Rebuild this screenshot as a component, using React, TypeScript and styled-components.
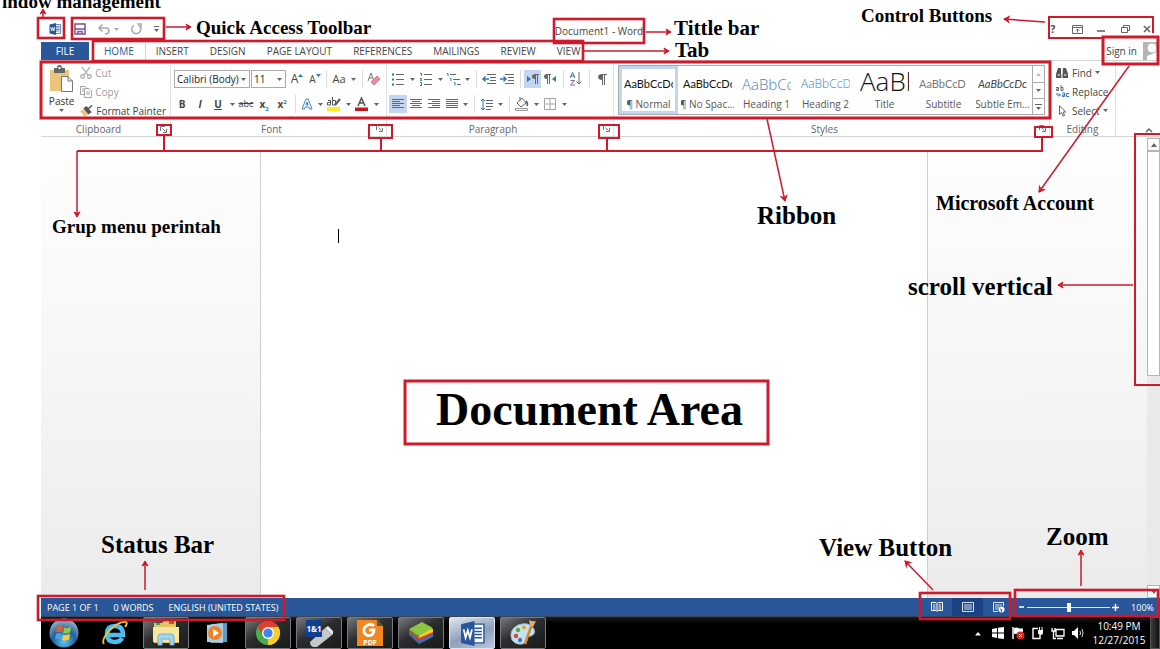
import React from "react";
import styled, { createGlobalStyle, css } from "styled-components";

const RED = "#cf1a2c";
const BLUE = "#2a579a";
const UI = '"Open Sans", "Noto Sans", sans-serif';

const Global = createGlobalStyle`
  *, *::before, *::after { box-sizing: border-box; }
  body { margin: 0; background: #fff; font-family: ${UI}; font-size: 10px; color: #444; }
  button, select, input { font: inherit; color: inherit; }
  button { border: 0; padding: 0; background: none; white-space: nowrap; }
  svg { display: block; flex: none; }
`;

/* ---------- page frame ---------- */

const Screen = styled.div`
  position: relative;
  min-height: 100vh;
  display: flex;
  flex-direction: column;
  padding-left: 41px;
  overflow: hidden;
`;

const TitleBar = styled.header`
  display: flex;
  align-items: center;
  height: 42px;
  padding: 16px 7px 0 6px;
`;

const QuickTools = styled.div`
  display: flex;
  align-items: center;
  width: 124px;
`;

const WindowTitle = styled.h1`
  flex: 1;
  margin: 0;
  padding-top: 3px;
  text-align: center;
  font-size: 10px;
  font-weight: 400;
`;

const WindowTools = styled.div`
  display: flex;
  align-items: center;
  justify-content: flex-end;
  width: 126px;
`;

const Tool = styled.button<{ w?: number; on?: boolean }>`
  display: inline-flex;
  align-items: center;
  justify-content: center;
  width: ${(p) => p.w ?? 18}px;
  height: 18px;
  line-height: 18px;
  flex: none;
  background: ${(p) => (p.on ? "#c3d5f0" : "transparent")};
`;

const TabBar = styled.nav`
  display: flex;
  height: 18px;
  line-height: 16px;
`;

const FileTab = styled.button`
  width: 48px;
  margin-right: 5px;
  background: ${BLUE};
  color: #fff;
`;

const Tab = styled.button<{ on?: boolean }>`
  padding: 0 11px 0 10px;
  color: ${(p) => (p.on ? BLUE : "#444")};
  ${(p) => p.on && css`border-right: 1px solid #d5d5d5;`}
`;

const SignIn = styled.button`
  display: flex;
  align-items: center;
  gap: 5px;
  margin-left: auto;
  padding-right: 2px;
`;

/* ---------- ribbon ---------- */

const Ribbon = styled.section`
  display: flex;
  height: 77px;
  border-top: 1px solid #d5d5d5;
  border-bottom: 1px solid #d5d5d5;
`;

const Group = styled.div<{ w?: number }>`
  display: flex;
  flex-direction: column;
  ${(p) => (p.w ? css`width: ${p.w}px; flex: none;` : css`flex: 1; min-width: 0;`)}
  border-right: 1px solid #e1e1e1;
`;

const GroupBody = styled.div<{ row?: boolean }>`
  display: flex;
  flex-direction: ${(p) => (p.row ? "row" : "column")};
  height: 59px;
  padding: ${(p) => (p.row ? "4px 4px" : "9px 2px 0")};
  gap: ${(p) => (p.row ? 0 : 7)}px;
`;

const GroupFoot = styled.div<{ launch?: boolean }>`
  display: grid;
  grid-template-columns: ${(p) => (p.launch ? "1fr 14px" : "1fr")};
  align-items: center;
  height: 17px;
  padding-top: 2px;
  color: #666;
  text-align: center;
  button { display: grid; place-items: center; }
`;

const Row = styled.div`
  display: flex;
  align-items: center;
  height: 18px;
`;

const Rule = styled.span`
  width: 8px;
  height: 18px;
  flex: none;
  background: linear-gradient(#dcdcdc, #dcdcdc) center / 1px 100% no-repeat;
`;

const Pick = styled.label<{ w: number }>`
  display: grid;
  grid-template-columns: 1fr 12px;
  align-items: center;
  width: ${(p) => p.w}px;
  height: 18px;
  margin: 0 0 0 1px;
  border: 1px solid #ababab;
  color: #222;
  select {
    grid-area: 1 / 1 / 2 / 3;
    appearance: none;
    width: 100%;
    height: 16px;
    border: 0;
    padding: 0 2px;
    background: transparent;
  }
  svg { grid-area: 1 / 2; justify-self: center; }
`;

const PasteButton = styled.button`
  display: flex;
  flex-direction: column;
  align-items: center;
  width: 35px;
  gap: 1px;
  line-height: 14px;
  color: #333;
`;

const Stack = styled.div`
  display: flex;
  flex-direction: column;
  align-self: center;
  padding-top: 2px;
`;

const LabelTool = styled.button<{ dim?: boolean }>`
  display: flex;
  align-items: center;
  gap: 3px;
  height: 19px;
  flex: none;
  color: ${(p) => (p.dim ? "#a0a0a0" : "#444")};
  padding-left: 2px;
`;

const Gallery = styled.div`
  display: flex;
  flex: 1;
  height: 50px;
  border: 1px solid #ababab;
  min-width: 0;
`;

const StyleCard = styled.button<{ on?: boolean }>`
  flex: 1 1 0;
  min-width: 0;
  display: flex;
  flex-direction: column;
  align-items: center;
  padding: 0 2px;
  overflow: hidden;
  border: 3px solid ${(p) => (p.on ? "#c3d5f0" : "transparent")};
`;

const Sample = styled.span<{ size: number; tone: string; light?: boolean; slant?: boolean }>`
  width: 100%;
  height: 28px;
  line-height: ${(p) => (p.size > 20 ? 24 : 30)}px;
  overflow: hidden;
  text-align: left;
  font-family: ${(p) => (p.light ? '"Open Sans"' : "Lato")}, sans-serif;
  font-weight: ${(p) => (p.light ? 300 : 400)};
  font-size: ${(p) => p.size}px;
  font-style: ${(p) => (p.slant ? "italic" : "normal")};
  color: ${(p) => p.tone};
`;

const SampleName = styled.span`
  line-height: 14px;
  color: #555;
`;

const GalleryScroll = styled.div`
  display: grid;
  grid-template-rows: 1fr 1fr 1fr;
  width: 12px;
  border-left: 1px solid #ababab;
  button { display: grid; place-items: center; }
  button + button { border-top: 1px solid #ababab; }
`;

const Collapse = styled.button`
  width: 44px;
  display: flex;
  align-items: flex-end;
  justify-content: flex-end;
  padding: 0 7px 3px 0;
`;

/* ---------- document ---------- */

const Workspace = styled.main`
  flex: 1;
  display: flex;
  background: linear-gradient(#fefefe, #f6f6f6 50%, #ebebeb);
`;

const PageArea = styled.div`
  flex: 1;
  display: flex;
  justify-content: center;
  padding: 14px 0 0;
`;

const Sheet = styled.article`
  width: 60.4%;
  padding: 78px 77px;
  background: #fff;
  border: 1px solid #cfcfcf;
  border-width: 0 1px;
`;

const TextCursor = styled.div`
  width: 1px;
  height: 14px;
  background: #000;
`;

const ScrollBar = styled.div`
  display: flex;
  flex-direction: column;
  width: 13px;
  padding-top: 1px;
  background: #e9e9e9;
  button {
    display: grid;
    place-items: center;
    height: 13px;
    border: 1px solid #b5b5b5;
    background: #fff;
  }
`;

const Thumb = styled.div`
  flex: 0 0 49%;
  margin-bottom: auto;
  border: 1px solid #b5b5b5;
  background: #fff;
`;

/* ---------- status bar ---------- */

const StatusBar = styled.footer`
  display: flex;
  align-items: center;
  height: 18px;
  padding: 0 6px;
  color: #fff;
  background: ${BLUE};
  font-size: 9px;
`;

const StatusItem = styled.span`
  margin-right: 15px;
`;

const Views = styled.div`
  display: flex;
  margin-left: auto;
`;

const ViewButton = styled.button<{ on?: boolean }>`
  display: grid;
  place-items: center;
  width: 31px;
  height: 18px;
  background: ${(p) => (p.on ? "#1b4383" : "transparent")};
`;

const ZoomControl = styled.div`
  display: flex;
  align-items: center;
  gap: 2px;
  margin-left: 5px;
  input {
    appearance: none;
    width: 83px;
    height: 10px;
    margin: 0;
    background: linear-gradient(#dfe6f2, #dfe6f2) center / 100% 1px no-repeat;
  }
  input::-webkit-slider-thumb {
    appearance: none;
    width: 4px;
    height: 9px;
    background: #fff;
  }
`;

const ZoomValue = styled.span`
  margin-left: 10px;
`;

/* ---------- task bar ---------- */

const TaskBar = styled.footer`
  display: flex;
  align-items: stretch;
  gap: 5px;
  height: 33px;
  background: linear-gradient(#1c1c1c, #000 20%);
  border-top: 1px solid #3b4658;
`;

const Task = styled.button<{ look?: "open" | "active" }>`
  display: grid;
  place-items: center;
  width: 46px;
  height: 32px;
  border: 1px solid transparent;
  border-radius: 2px;
  ${(p) => p.look === "open" && css`
    border-color: #77797c;
    background: linear-gradient(150deg, #75777a, #2b2c2e 45%, #1a1a1b);
  `}
  ${(p) => p.look === "active" && css`
    border-color: #dfe5ef;
    background: linear-gradient(160deg, #dfe6f0, #8f9fbb 55%, #b9c6dc);
  `}
`;

const Tray = styled.div`
  display: flex;
  align-items: center;
  margin-left: auto;
`;

const TrayIcons = styled.div`
  display: flex;
  align-items: center;
  gap: 6px;
  margin-right: 3px;
`;

const Clock = styled.time`
  width: 62px;
  text-align: center;
  line-height: 14px;
  color: #fff;
`;

const ShowDesktop = styled.button`
  align-self: stretch;
  width: 10px;
  border: 1px solid #555;
  background: linear-gradient(90deg, #3a3a3a, #111);
`;

/* ---------- callouts drawn over the window ---------- */

const Layer = styled.div<{ h: "left" | "right"; v: "top" | "bottom" }>`
  position: absolute;
  ${(p) => p.h}: 0;
  ${(p) => p.v}: 0;
  width: 1160px;
  height: 649px;
  pointer-events: none;
  svg { position: absolute; inset: 0; overflow: visible; }
`;

const Note = styled.span<{ x: number; y: number; size: number }>`
  position: absolute;
  left: ${(p) => p.x}px;
  top: ${(p) => p.y}px;
  font: 700 ${(p) => p.size}px / 1 "Liberation Serif", serif;
  color: #000;
  white-space: nowrap;
`;

type BoxT = [number, number, number, number, number?];
type LineT = [number, number, number, number];
type NoteT = [string, number, number, number];

function Arrow({ at }: { at: LineT }) {
  const [x1, y1, x2, y2] = at;
  const a = (Math.atan2(y2 - y1, x2 - x1) * 180) / Math.PI;
  return (
    <g>
      <path d={`M${x1} ${y1}L${x2} ${y2}`} strokeWidth="1.5" />
      <path d="M-5 -3L0 0L-5 3L-3.5 0Z" fill={RED} strokeWidth="1" transform={`translate(${x2} ${y2}) rotate(${a})`} />
    </g>
  );
}

function Callouts(p: { h: "left" | "right"; v: "top" | "bottom"; boxes?: BoxT[]; arrows?: LineT[]; paths?: string[]; notes?: NoteT[] }) {
  return (
    <Layer h={p.h} v={p.v}>
      <svg width="1160" height="649" fill="none" stroke={RED} aria-hidden="true">
        {p.boxes?.map(([x, y, x2, y2, s], i) => (
          <rect key={i} x={x} y={y} width={x2 - x} height={y2 - y} strokeWidth={s ?? 2.6} />
        ))}
        {p.paths?.map((d) => <path key={d} d={d} strokeWidth="2" />)}
        {p.arrows?.map((at, i) => <Arrow key={i} at={at} />)}
      </svg>
      {p.notes?.map(([t, x, y, size]) => <Note key={t} x={x} y={y} size={size}>{t}</Note>)}
    </Layer>
  );
}

/* ---------- icons ---------- */

const Caret = ({ c = "#666" }: { c?: string }) => (
  <svg width="5" height="3" viewBox="0 0 5 3"><path d="M0 0H5L2.5 3Z" fill={c} /></svg>
);
const CaretTool = ({ w = 10, label }: { w?: number; label: string }) => (
  <Tool w={w} aria-label={label}><Caret /></Tool>
);

const I = ({ s = 16, w, h, children }: { s?: number; w?: number; h?: number; children: React.ReactNode }) => (
  <svg width={w ?? s} height={h ?? s} viewBox={`0 0 ${w ?? s} ${h ?? s}`} fill="none" stroke="#666" aria-hidden="true">{children}</svg>
);

const WordMark = ({ size }: { size: number }) => (
  <svg width={size} height={size} viewBox="0 0 24 24" aria-hidden="true">
    <path d="M12 3H23V21H12Z" fill="#fff" stroke={BLUE} strokeWidth="1.4" />
    <path d="M14 7H21M14 10H21M14 13H21M14 16H21" stroke={BLUE} strokeWidth="1.5" />
    <path d="M1 3L14 0V24L1 21Z" fill={BLUE} />
    <path d="M3.5 8L5.4 16L7.5 9L9.6 16L11.5 8" fill="none" stroke="#fff" strokeWidth="1.7" />
  </svg>
);

const Lines = ({ rows }: { rows: [number, number][] }) => (
  <I w={12} h={12}>{rows.map(([a, b], i) => <path key={i} d={`M${a} ${1.5 + i * 2}H${b}`} />)}</I>
);

const Launcher = () => (
  <I w={7} h={7}><path d="M.5 5V.5H5M2.5 2.5L5.5 5.5M6.5 3V6.5H3" stroke="#777" /></I>
);

const Foot = ({ name, launch }: { name: string; launch?: boolean }) => (
  <GroupFoot launch={launch}>
    <span>{name}</span>
    {launch && <button aria-label={`${name} settings`}><Launcher /></button>}
  </GroupFoot>
);

const Indent = ({ flip }: { flip?: boolean }) => (
  <I w={14} h={12}>
    <path d="M5 1.5H14M8 4.5H14M8 7.5H14M5 10.5H14" />
    <path d={flip ? "M0 6H6M3.5 3.5L6 6L3.5 8.5" : "M7 6H1M3.5 3.5L1 6L3.5 8.5"} stroke="#2f74b5" strokeWidth="1.4" />
  </I>
);

const Letter = styled.span<{ size?: number; bold?: boolean; italic?: boolean; line?: string; tone?: string }>`
  font-size: ${(p) => p.size ?? 10}px;
  font-weight: ${(p) => (p.bold ? 700 : 400)};
  font-style: ${(p) => (p.italic ? "italic" : "normal")};
  text-decoration: ${(p) => p.line ?? "none"};
  color: ${(p) => p.tone ?? "#444"};
  sub, sup { font-size: 6px; line-height: 0; color: #2f74b5; }
`;

/* ---------- sections ---------- */

function Clipboard() {
  return (
    <Group w={130}>
      <GroupBody row>
        <PasteButton>
          <svg width="25" height="28" viewBox="0 0 25 28" aria-hidden="true">
            <path d="M1 5H20V26H1Z" fill="#ecc57c" />
            <path d="M5 3H8Q8 0 10.500 0T13 3H16V8H5Z" fill="#666" />
            <path d="M9.500 2H11.500V4H9.500Z" fill="#fff" />
            <path d="M12.500 11.500H19L23.500 16V26.500H12.500Z" fill="#fff" stroke="#777" />
            <path d="M19 11.500V16H23.500" fill="none" stroke="#777" />
          </svg>
          Paste
          <Caret />
        </PasteButton>
        <Stack>
          <LabelTool dim>
            <I w={12} h={12}><g stroke="#a5a5a5" strokeWidth="1.200"><path d="M2 0L8 8M10 0L4 8" /><circle cx="2.600" cy="9.500" r="1.800" /><circle cx="9.400" cy="9.500" r="1.800" /></g></I>
            Cut
          </LabelTool>
          <LabelTool dim>
            <I w={12} h={12}><g stroke="#a5a5a5"><path d="M4.500 8.500H.5V.5H5L6.500 2M2 3H4M2 5H4" /><path d="M4.500 2.500H9L11.500 5V11.500H4.500ZM6 6H10M6 8H10" fill="#fff" /></g></I>
            Copy
          </LabelTool>
          <LabelTool>
            <I w={13} h={12}><path d="M0 6L4 4L8 9L5 12Z" fill="#ecc57c" stroke="none" /><path d="M4.500 3.500L6.500 2L10.500 7L8.500 8.500ZM8 4L12 .5" fill="#555" stroke="#555" strokeWidth="1.600" /></I>
            Format Painter
          </LabelTool>
        </Stack>
      </GroupBody>
      <Foot name="Clipboard" launch />
    </Group>
  );
}

function FontGroup() {
  return (
    <Group w={216}>
      <GroupBody>
        <Row>
          <Pick w={76}><select aria-label="Font"><option>Calibri (Body)</option></select><Caret /></Pick>
          <Pick w={35}><select aria-label="Font size"><option>11</option></select><Caret /></Pick>
          <Tool w={22} aria-label="Grow font"><Letter size={12}>A</Letter><I w={5} h={10}><path d="M0 3L2.500 0L5 3Z" fill="#2f74b5" stroke="none" /></I></Tool>
          <Tool w={14} aria-label="Shrink font"><Letter>A</Letter><I w={5} h={10}><path d="M0 0H5L2.500 3Z" fill="#2f74b5" stroke="none" /></I></Tool>
          <Rule />
          <Tool w={18}><Letter size={11}>Aa</Letter></Tool>
          <CaretTool label="Change case" />
          <Rule />
          <Tool w={16} aria-label="Clear formatting">
            <I w={14} h={14}><path d="M1 9L4 1L7 9M2 6H6" stroke="#777" /><path d="M4 10L10 4L13 7L7 13Z" fill="#e68e99" stroke="#d77b88" /></I>
          </Tool>
        </Row>
        <Row>
          <Tool><Letter bold>B</Letter></Tool>
          <Tool><Letter bold italic>I</Letter></Tool>
          <Tool><Letter bold line="underline">U</Letter></Tool>
          <CaretTool label="Underline styles" />
          <Tool><Letter size={9} line="line-through">abc</Letter></Tool>
          <Tool><Letter bold>x<sub>2</sub></Letter></Tool>
          <Tool><Letter bold>x<sup>2</sup></Letter></Tool>
          <Rule />
          <Tool w={16} aria-label="Text effects">
            <I w={12} h={12}><path d="M1 11L5 1H7L11 11H8.500L7.800 9H4.200L3.500 11ZM5 7H7L6 4Z" stroke="#3f83c4" /></I>
          </Tool>
          <CaretTool label="Text effect styles" />
          <Tool aria-label="Highlight">
            <I w={14} h={14}><path d="M1 3.500H3.500V8H.5V5.500H3.500M5.500 0V8H8.500V3.500H5.500" stroke="#555" /><path d="M8 8L13 2" stroke="#555" strokeWidth="2" /><path d="M0 10H13V14H0Z" fill="#ffee1c" stroke="none" /></I>
          </Tool>
          <CaretTool label="Highlight colours" />
          <Tool aria-label="Font colour">
            <I w={14} h={14}><path d="M3 9L6.500 1L10 9M4.500 6H8.500" stroke="#555" strokeWidth="1.500" /><path d="M0 10.500H13V14H0Z" fill="#c8141e" stroke="none" /></I>
          </Tool>
          <CaretTool label="Font colours" />
        </Row>
      </GroupBody>
      <Foot name="Font" launch />
    </Group>
  );
}

function ParagraphGroup() {
  return (
    <Group w={227}>
      <GroupBody>
        <Row>
          <Tool aria-label="Bullets"><I w={12} h={13}><path d="M4 1.500H12M4 6.500H12M4 11.500H12" /><path d="M0 .5H2V2.500H0ZM0 5.500H2V7.500H0ZM0 10.500H2V12.500H0Z" fill="#2f74b5" stroke="none" /></I></Tool>
          <CaretTool label="Bullet library" />
          <Tool aria-label="Numbering"><I w={12} h={13}><path d="M4 1.500H12M4 6.500H12M4 11.500H12" /><path d="M0 .5H1.500V3M0 5.500H1.500L.5 7.500H2M0 9.500H1.500V12.500H0" stroke="#2f74b5" /></I></Tool>
          <CaretTool label="Numbering library" />
          <Tool aria-label="Multilevel list"><I w={14} h={13}><path d="M3 1.500H9M6 6.500H13M10 11.500H14" /><path d="M0 .5H1V3M3 5.500H4V8M7 9.500H8V12.500" stroke="#2f74b5" /></I></Tool>
          <CaretTool label="List library" w={9} />
          <Rule />
          <Tool aria-label="Decrease indent"><Indent /></Tool>
          <Tool aria-label="Increase indent"><Indent flip /></Tool>
          <Rule />
          <Tool on w={17} aria-label="Left to right"><I w={12} h={10}><path d="M0 2L4 5L0 8Z" fill="#2f74b5" stroke="none" /><path d="M8.500 10V.5M10.500 10V.5M12 .5H8" /><path d="M8 0Q5 0 5 2.500T8 5Z" fill="#666" stroke="none" /></I></Tool>
          <Tool aria-label="Right to left"><I w={12} h={10}><path d="M12 2L8 5L12 8Z" fill="#2f74b5" stroke="none" /><path d="M3.500 10V.5M5.500 10V.5M7 .5H3" /><path d="M3 0Q0 0 0 2.500T3 5Z" fill="#666" stroke="none" /></I></Tool>
          <Rule />
          <Tool aria-label="Sort"><I w={12} h={14}><path d="M0 6L2.500 .5L5 6M1 4H4" stroke="#2f74b5" /><path d="M.5 8.500H4.500L.5 13H5" stroke="#85629e" /><path d="M9 0V12M6.500 9.500L9 12L11.500 9.500" /></I></Tool>
          <Rule />
          <Tool aria-label="Show marks"><I w={9} h={11}><path d="M4.500 11V.5M6.500 11V.5M9 .5H4" /><path d="M4.500 0Q0 0 0 3T4.500 6Z" fill="#666" stroke="none" /></I></Tool>
        </Row>
        <Row>
          <Tool on aria-label="Align left"><Lines rows={[[0, 12], [0, 8], [0, 12], [0, 8], [0, 12]]} /></Tool>
          <Tool aria-label="Centre"><Lines rows={[[0, 12], [2, 10], [0, 12], [2, 10], [0, 12]]} /></Tool>
          <Tool aria-label="Align right"><Lines rows={[[0, 12], [4, 12], [0, 12], [4, 12], [0, 12]]} /></Tool>
          <Tool aria-label="Justify"><Lines rows={[[0, 12], [0, 12], [0, 12], [0, 12], [0, 12]]} /></Tool>
          <CaretTool label="Justify options" w={9} />
          <Rule />
          <Tool aria-label="Line spacing"><I w={12} h={13}><path d="M5 2.500H12M5 5.500H12M5 8.500H12M5 11.500H10" /><path d="M2 1V12M0 3L2 1L4 3M0 10L2 12L4 10" stroke="#2f74b5" /></I></Tool>
          <CaretTool label="Spacing options" w={9} />
          <Rule />
          <Tool aria-label="Shading"><I w={14} h={14}><path d="M2 6L7 1L11 6L6 10ZM5 4V0" /><path d="M11 4Q13 6 12 9" stroke="#2f74b5" strokeWidth="1.800" /><path d="M.5 11.500H12.500V13.500H.5Z" stroke="#999" /></I></Tool>
          <CaretTool label="Shading colours" />
          <Tool aria-label="Borders"><I w={12} h={12}><path d="M.5 .5H11.500V11.500H.5ZM6 0V12M0 6H12" stroke="#a5a5a5" /></I></Tool>
          <CaretTool label="Border options" />
        </Row>
      </GroupBody>
      <Foot name="Paragraph" launch />
    </Group>
  );
}

const samples = [
  { name: "¶ Normal", text: "AaBbCcDc", size: 11, tone: "#111" },
  { name: "¶ No Spac...", text: "AaBbCcDc", size: 11, tone: "#111" },
  { name: "Heading 1", text: "AaBbCc", size: 15, tone: "#4684b8", light: true },
  { name: "Heading 2", text: "AaBbCcD", size: 12, tone: "#4684b8", light: true },
  { name: "Title", text: "AaBb", size: 26, tone: "#111", light: true },
  { name: "Subtitle", text: "AaBbCcD", size: 11, tone: "#777" },
  { name: "Subtle Em...", text: "AaBbCcDc", size: 11, tone: "#444", slant: true },
];

function StylesGroup() {
  return (
    <Group>
      <GroupBody row>
        <Gallery>
          {samples.map((s, i) => (
            <StyleCard key={s.name} on={i === 0}>
              <Sample size={s.size} tone={s.tone} light={s.light} slant={s.slant}>{s.text}</Sample>
              <SampleName>{s.name}</SampleName>
            </StyleCard>
          ))}
          <GalleryScroll>
            <button aria-label="Previous styles"><svg width="5" height="3" viewBox="0 0 5 3"><path d="M0 3H5L2.500 0Z" fill="#bbb" /></svg></button>
            <button aria-label="Next styles"><Caret /></button>
            <button aria-label="All styles"><svg width="7" height="6" viewBox="0 0 7 6"><path d="M0 0H7V1H0ZM1 3H6L3.500 6Z" fill="#666" /></svg></button>
          </GalleryScroll>
        </Gallery>
      </GroupBody>
      <Foot name="Styles" launch />
    </Group>
  );
}

function Editing() {
  return (
    <Group w={66}>
      <GroupBody row>
        <Stack>
          <LabelTool>
            <I w={13} h={11}><path d="M2 1H5V4L5.500 11H0V7ZM7 1H10L12 7V11H6.500V4Z" fill="#555" stroke="none" /><path d="M1.500 8H4M8 8H10.500M6 3V7" stroke="#fff" /></I>
            Find <Caret />
          </LabelTool>
          <LabelTool>
            <I w={13} h={13}><path d="M0 2.500H2.500V5.500H.5V4H2.500M5 0V5.500H7V2.500H5" /><path d="M1 8V10H4M3 8.500L4.500 10L3 11.500" stroke="#2f74b5" /><path d="M6 8H8.500V11.500H6.500V10H8.500M13 8.500H10.500V11.500H13" stroke="#2f74b5" /></I>
            Replace
          </LabelTool>
          <LabelTool>
            <I w={13} h={12}><path d="M3.500 .8V9.500L5.500 7.500L7 11L8.500 10.500L7.200 7H9.800Z" /></I>
            Select <Caret />
          </LabelTool>
        </Stack>
      </GroupBody>
      <Foot name="Editing" />
    </Group>
  );
}

const Tasks = () => (
  <>
    <Task aria-label="Start">
      <svg width="30" height="30" viewBox="0 0 30 30">
        <defs><radialGradient id="orb" cx=".5" cy=".8" r=".8"><stop offset="0" stopColor="#5fc6f0" /><stop offset=".5" stopColor="#1f5f9a" /><stop offset="1" stopColor="#a9c0d4" /></radialGradient></defs>
        <circle cx="15" cy="15" r="14.500" fill="url(#orb)" />
        <path d="M8 9Q11 7 14 9L13 14.500Q10 13 7 14.500Z" fill="#ee5b2a" />
        <path d="M15 9.500Q18 11 22 9L21 14.500Q18 16 14 15Z" fill="#8fc841" />
        <path d="M7 16Q10 14 13 16L12 21.500Q9 20 6 21Z" fill="#45a5e6" />
        <path d="M14 16.500Q17 18 21 16L20 21.500Q17 23 13 22Z" fill="#fccb38" />
      </svg>
    </Task>
    <Task aria-label="Internet Explorer">
      <svg width="28" height="28" viewBox="0 0 28 28" fill="none">
        <path d="M21 19Q19 23 14 23Q6 23 6 15T14 7Q22 7 22 16H8" stroke="#4dbdf1" strokeWidth="4.500" />
        <path d="M3 25Q0 21 8 12Q18 2 25 3Q27 4 24 8" stroke="#f3c431" strokeWidth="1.800" />
      </svg>
    </Task>
    <Task look="open" aria-label="Explorer">
      <svg width="28" height="28" viewBox="0 0 28 28">
        <path d="M2 4H10L12 2H24V8H27V24H2Z" fill="#e3c568" />
        <path d="M4 4H8V6H4Z" fill="#4c9c50" /><path d="M17 2H22V5H17Z" fill="#d24b3c" />
        <path d="M1 8H27V23H1Z" fill="#f8e5a0" />
        <path d="M6 26V18Q6 15 9 15H19Q22 15 22 18V26H18V20H10V26Z" fill="#a2d5ee" stroke="#70afd0" />
      </svg>
    </Task>
    <Task aria-label="Media Player">
      <svg width="24" height="24" viewBox="0 0 24 24">
        <path d="M6 3L22 2V21L6 22Z" fill="#5b9cc6" /><path d="M2 4L18 2V22L2 21Z" fill="#a9cfe5" />
        <circle cx="10" cy="12" r="7" fill="#f0802a" /><path d="M8 8L14 12L8 16Z" fill="#fff" />
      </svg>
    </Task>
    <Task look="open" aria-label="Chrome">
      <svg width="26" height="26" viewBox="0 0 26 26">
        <circle cx="13" cy="13" r="12" fill="#4aae4e" />
        <path d="M13 13L2.600 7A12 12 0 0 1 23.400 7Z" fill="#e2402f" />
        <path d="M13 13L23.400 7A12 12 0 0 1 13 25Z" fill="#fccd2f" />
        <path d="M2.600 7L8 16L13 9Z" fill="#e2402f" /><path d="M23.400 7H13L18 16Z" fill="#fccd2f" />
        <circle cx="13" cy="13" r="6" fill="#fff" /><circle cx="13" cy="13" r="4.600" fill="#4285e8" />
      </svg>
    </Task>
    <Task look="open" aria-label="1&1">
      <svg width="28" height="28" viewBox="0 0 28 28">
        <path d="M5 23L20 9L27 16L12 28Q5 29 5 23Z" fill="#c4c6c9" />
        <path d="M20 9L23 7L29 13L27 16Z" fill="#e8e8ea" />
        <path d="M1 1H17V18H1Z" fill="#103e90" />
        <text x="9" y="13" textAnchor="middle" fontSize="8" fontWeight="700" fill="#fff" fontFamily="Open Sans, sans-serif">1&amp;1</text>
      </svg>
    </Task>
    <Task look="open" aria-label="PDF reader">
      <svg width="28" height="28" viewBox="0 0 28 28">
        <path d="M1 1H21L27 7V27H1Z" fill="#f0871f" /><path d="M21 1L27 7H21Z" fill="#555" />
        <path d="M18 7Q15 4 12 6Q7 8 8 13Q10 18 16 16Q18 14 18 11H13" fill="none" stroke="#fff" strokeWidth="2.800" />
        <text x="14" y="26" textAnchor="middle" fontSize="7" fontWeight="700" fill="#fff" fontFamily="Open Sans, sans-serif">PDF</text>
      </svg>
    </Task>
    <Task look="open" aria-label="BlueStacks">
      <svg width="26" height="24" viewBox="0 0 26 24">
        <path d="M1 14L11 23L25 16V12L1 11Z" fill="#2c76bd" /><path d="M1 11L11 20L25 13V10Z" fill="#e2382d" />
        <path d="M1 9L11 17L25 11V8Z" fill="#f8cc2d" /><path d="M1 8L14 1L25 7L11 15Z" fill="#8cc63e" /><path d="M1 8L11 15V17L1 10Z" fill="#4d952e" />
      </svg>
    </Task>
    <Task look="active" aria-label="Word"><WordMark size={25} /></Task>
    <Task look="open" aria-label="Paint">
      <svg width="28" height="28" viewBox="0 0 28 28">
        <path d="M3 21Q-1 11 9 6Q20 2 25 10Q27 15 22 17Q17 17 18 21Q16 26 9 25Q5 24 3 21Z" fill="#c6e1ee" stroke="#8db4c9" />
        <circle cx="7" cy="17" r="2.300" fill="#d44a3c" /><circle cx="9" cy="11" r="2.200" fill="#5ba546" /><circle cx="15" cy="8.500" r="2" fill="#e9a22f" /><circle cx="11" cy="21" r="2.200" fill="#3c78c8" />
        <path d="M23 5L16 25" stroke="#d68a2c" strokeWidth="2.500" /><path d="M20 1Q24 3 27 2L24 8L21 7Z" fill="#e1ac75" />
      </svg>
    </Task>
  </>
);

export default function App() {
  return (
    <Screen>
      <Global />
      <TitleBar>
        <QuickTools>
          <Tool w={16} aria-label="Window menu"><WordMark size={12} /></Tool>
          <Tool w={34} aria-label="Save"><I w={12} h={12}><path d="M1 1H11V11H1ZM1 6H11M4 11V8.500H8V11" stroke="#80509c" strokeWidth="1.500" /></I></Tool>
          <Tool w={14} aria-label="Undo"><I w={12} h={11}><path d="M1 4H8Q11 4 11 7T7 10M4.500 .5L1 4L4.500 7.500" stroke="#aaa" strokeWidth="1.600" /></I></Tool>
          <Tool w={10} aria-label="Undo history"><Caret c="#aaa" /></Tool>
          <Tool w={30} aria-label="Repeat"><I w={12} h={12}><path d="M8.500 2.300A4.500 4.500 0 1 1 4 2.300M7 1H11V5" stroke="#aaa" strokeWidth="1.500" /></I></Tool>
          <Tool w={10} aria-label="Customize"><svg width="5" height="6" viewBox="0 0 5 6"><path d="M0 0H5V1H0ZM0 3H5L2.500 6Z" fill="#666" /></svg></Tool>
        </QuickTools>
        <WindowTitle>Document1 - Word</WindowTitle>
        <WindowTools>
          <Tool w={16}><Letter bold>?</Letter></Tool>
          <Tool w={32} aria-label="Ribbon options"><I w={11} h={9}><path d="M.5 .5H10.500V8.500H.5ZM.5 2.500H10.500M5.500 7.500V4M4 5.500L5.500 4L7 5.500" /></I></Tool>
          <Tool w={16} aria-label="Minimize"><I w={8} h={6}><path d="M0 5H8" strokeWidth="1.600" /></I></Tool>
          <Tool w={32} aria-label="Restore"><I w={9} h={8}><path d="M2.500 2.500V.5H8.500V5.500H6.500M.5 2.500H6.500V7.500H.5Z" /></I></Tool>
          <Tool w={12} aria-label="Close"><I w={8} h={8}><path d="M1 1L7 7M7 1L1 7" strokeWidth="1.600" /></I></Tool>
        </WindowTools>
      </TitleBar>

      <TabBar>
        <FileTab>FILE</FileTab>
        {["HOME", "INSERT", "DESIGN", "PAGE LAYOUT", "REFERENCES", "MAILINGS", "REVIEW", "VIEW"].map((t, i) => (
          <Tab key={t} on={i === 0}>{t}</Tab>
        ))}
        <SignIn>
          Sign in
          <svg width="16" height="18" viewBox="0 0 16 18"><path d="M1 0H16V2L10 12L5 14V18H1Z" fill="#b5b5b5" /><circle cx="10" cy="6" r="5" fill="#fff" stroke="#b5b5b5" /></svg>
        </SignIn>
      </TabBar>

      <Ribbon>
        <Clipboard />
        <FontGroup />
        <ParagraphGroup />
        <StylesGroup />
        <Editing />
        <Collapse aria-label="Collapse ribbon"><I w={8} h={6}><path d="M1 5L4 2L7 5" strokeWidth="1.500" /></I></Collapse>
      </Ribbon>

      <Workspace>
        <PageArea>
          <Sheet><TextCursor /></Sheet>
        </PageArea>
        <ScrollBar>
          <button aria-label="Scroll up"><svg width="6" height="4" viewBox="0 0 6 4"><path d="M0 4H6L3 0Z" fill="#666" /></svg></button>
          <Thumb />
          <button aria-label="Scroll down"><svg width="6" height="4" viewBox="0 0 6 4"><path d="M0 0H6L3 4Z" fill="#666" /></svg></button>
        </ScrollBar>
      </Workspace>

      <StatusBar>
        <StatusItem>PAGE 1 OF 1</StatusItem>
        <StatusItem>0 WORDS</StatusItem>
        <StatusItem>ENGLISH (UNITED STATES)</StatusItem>
        <Views>
          <ViewButton aria-label="Read mode"><I w={12} h={10}><path d="M6 1.500L5 .5H.5V8.500H5L6 9.500L7 8.500H11.500V.5H7ZM6 1.500V9M2 3H4.500M2 5H4.500M2 7H4.500M7.500 3H10M7.500 5H10M7.500 7H10" stroke="#fff" /></I></ViewButton>
          <ViewButton on aria-label="Print layout"><I w={12} h={10}><path d="M.5 .5H11.500V9.500H.5ZM2 3H10M2 5H10M2 7H10" stroke="#dce5f3" /></I></ViewButton>
          <ViewButton aria-label="Web layout"><I w={12} h={11}><path d="M5 9.500H.5V.5H10.500V4M2 3H9M2 5H6M2 7H5" stroke="#dce5f3" /><circle cx="8.500" cy="7.500" r="3" fill="#fff" stroke="none" /><path d="M7 7L9 8L8 10" stroke={BLUE} /></I></ViewButton>
        </Views>
        <ZoomControl>
          <button aria-label="Zoom out"><I w={6} h={6}><path d="M0 3H5" stroke="#fff" strokeWidth="1.500" /></I></button>
          <input type="range" aria-label="Zoom" defaultValue={50} />
          <button aria-label="Zoom in"><I w={7} h={7}><path d="M0 3.500H7M3.500 0V7" stroke="#fff" strokeWidth="1.500" /></I></button>
          <ZoomValue>100%</ZoomValue>
        </ZoomControl>
      </StatusBar>

      <TaskBar>
        <Tasks />
        <Tray>
          <TrayIcons>
            <I w={14} h={5}><path d="M4 4.500H10L7 1Z" fill="#fff" stroke="none" /></I>
            <I w={14} h={14}><path d="M1 3L6 2V6.500H1ZM7 1.800L13 1V6.500H7ZM1 7.500H6V12L1 11ZM7 7.500H13V13L7 12.200Z" fill="#fff" stroke="none" /></I>
            <I w={14} h={14}><path d="M2 1V13" stroke="#fff" strokeWidth="1.500" /><path d="M3 2Q6 1 8 2.500H12V9H8Q6 7 3 8Z" fill="#fff" stroke="none" /><circle cx="9.500" cy="9.500" r="4" fill="#d42b25" stroke="none" /><path d="M8 8L11 11M11 8L8 11" stroke="#fff" /></I>
            <I w={14} h={14}><path d="M7 2.500H2V12.500H9V9" stroke="#fff" strokeWidth="1.400" /><path d="M7 4H12V7Q12 9 9.500 9T7 7ZM8 1H9V4H8ZM10.500 1H11.500V4H10.500Z" fill="#fff" stroke="none" /></I>
            <I w={14} h={14}><path d="M5 3.500H13V10H5ZM6 12.500H12M1 2V5H4V2M2.500 5V12.500H5" stroke="#fff" strokeWidth="1.300" /></I>
            <I w={14} h={14}><path d="M1 5H3L7 1V13L3 9H1Z" fill="#fff" stroke="none" /><path d="M9 5Q10 7 9 9M11 3Q13 7 11 11" stroke="#ddd" /></I>
          </TrayIcons>
          <Clock>10:49 PM<br />12/27/2015</Clock>
          <ShowDesktop aria-label="Show desktop" />
        </Tray>
      </TaskBar>

      <Callouts
        h="left" v="top"
        boxes={[[38, 18, 64, 38], [72, 18, 164, 39], [554, 19, 644, 43], [93, 41, 583, 61], [157, 125, 171, 135, 2], [369, 125, 392, 138, 2], [599, 125, 619, 138, 2], [405, 381, 768, 444, 3]]}
        arrows={[[43, 17, 43, 9], [166, 27, 191, 27], [646, 32, 671, 32], [584, 51, 669, 51], [77, 151, 77, 217], [767, 119, 785, 201]]}
        paths={["M77 151H1042M164 135V151M381 138V151M607 138V151"]}
        notes={[["indow management", 2, -8, 19], ["Quick Access Toolbar", 196, 18, 19], ["Tittle bar", 674, 18, 21], ["Tab", 675, 40, 21], ["Grup menu perintah", 52, 217, 19], ["Ribbon", 757, 203, 25], ["Document Area", 436, 387, 46]]}
      />
      <Callouts
        h="right" v="top"
        boxes={[[41, 62, 1050, 118, 3], [1103, 37, 1158, 64, 3], [1035, 127, 1052, 137, 2]]}
        paths={["M1103 38H1049V17H1153V33", "M1160 134H1135V385H1160", "M1042 137V152"]}
        arrows={[[1045, 22, 1004, 19], [1129, 66, 1039, 192], [1133, 285, 1058, 285]]}
        notes={[["Control Buttons", 861, 6, 19], ["Microsoft Account", 936, 193, 20], ["scroll vertical", 908, 274, 25]]}
      />
      <Callouts
        h="left" v="bottom"
        boxes={[[38, 596, 284, 620]]}
        arrows={[[145, 590, 145, 561]]}
        notes={[["Status Bar", 101, 532, 25]]}
      />
      <Callouts
        h="right" v="bottom"
        boxes={[[920, 593, 1010, 619], [1015, 590, 1158, 616]]}
        arrows={[[933, 590, 905, 561], [1081, 586, 1081, 550]]}
        notes={[["View Button", 819, 535, 25], ["Zoom", 1046, 524, 25]]}
      />
    </Screen>
  );
}
